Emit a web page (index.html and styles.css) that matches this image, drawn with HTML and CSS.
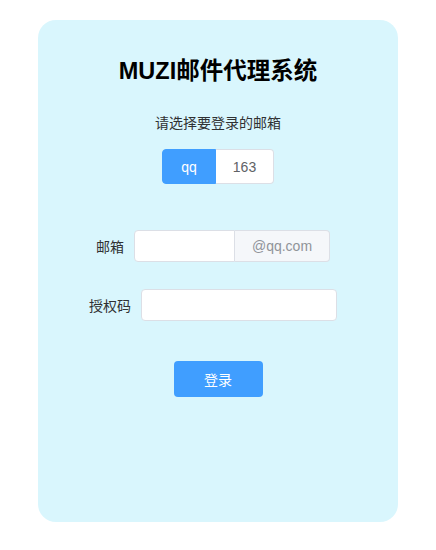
FILE: index.html
```html
<!DOCTYPE html>
<html lang="zh">
<head>
<meta charset="utf-8">
<link rel="stylesheet" href="styles.css">
</head>
<body>
<div class="card">
  <h1 class="title">MUZI邮件代理系统</h1>
  <p class="subtitle">请选择要登录的邮箱</p>
  <div class="radio-group">
    <span class="radio active">qq</span>
    <span class="radio">163</span>
  </div>
  <div class="row row-email">
    <label class="label">邮箱</label>
    <div class="input-group">
      <input class="input input-email" type="text">
      <span class="append">@qq.com</span>
    </div>
  </div>
  <div class="row row-code">
    <label class="label">授权码</label>
    <input class="input input-code" type="password">
  </div>
  <button class="login">登录</button>
</div>
</body>
</html>
```
FILE: styles.css
```css
* { box-sizing: border-box; }
body {
  margin: 0;
  background: #ffffff;
  font-family: "Liberation Sans", "Noto Sans CJK SC", sans-serif;
}
.card {
  width: 360px;
  height: 502px;
  margin: 20px auto 0;
  background: #d9f6fd;
  border-radius: 18px;
  padding-top: 36px;
  display: flex;
  flex-direction: column;
  align-items: center;
}
.title {
  margin: 0;
  font-size: 23.5px;
  line-height: 30px;
  font-weight: bold;
  color: #000;
}
.subtitle {
  margin: 27px 0 0;
  font-size: 14px;
  line-height: 20px;
  color: #303133;
}
.radio-group {
  margin-top: 16px;
  display: flex;
  height: 35px;
}
.radio {
  display: flex;
  align-items: center;
  justify-content: center;
  font-size: 14px;
  color: #606266;
  background: #fff;
  border: 1px solid #dcdfe6;
}
.radio.active {
  width: 54px;
  background: #409eff;
  border-color: #409eff;
  color: #fff;
  border-radius: 4px 0 0 4px;
}
.radio:last-child {
  width: 58px;
  border-left: 0;
  border-radius: 0 4px 4px 0;
}
.row {
  display: flex;
  align-items: center;
  height: 32px;
  padding-right: 10px;
}
.row-email { margin-top: 46px; }
.row-code { margin-top: 27px; }
.label {
  font-size: 14px;
  color: #303133;
  padding-right: 10px;
}
.input-group {
  display: flex;
  height: 32px;
}
.input {
  height: 32px;
  border: 1px solid #dcdfe6;
  background: #fff;
  border-radius: 4px;
  outline: none;
  padding: 0 12px;
}
.input-email {
  width: 101px;
  border-radius: 4px 0 0 4px;
}
.append {
  width: 95px;
  display: flex;
  align-items: center;
  justify-content: center;
  background: #f5f7fa;
  color: #909399;
  font-size: 14px;
  border: 1px solid #dcdfe6;
  border-left: 0;
  border-radius: 0 4px 4px 0;
}
.input-code { width: 196px; }
.login {
  margin-top: 40px;
  width: 89px;
  height: 36px;
  border: 0;
  border-radius: 4px;
  background: #409eff;
  color: #fff;
  font-size: 14px;
  font-family: "Noto Sans CJK SC", sans-serif;
  padding: 0;
}
```
